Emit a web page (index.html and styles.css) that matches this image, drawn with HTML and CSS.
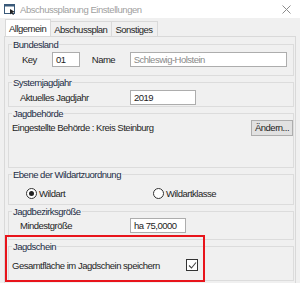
FILE: index.html
```html
<!DOCTYPE html>
<html lang="de">
<head>
    <meta charset="UTF-8">
    <title>Abschussplanung Einstellungen</title>
    <link rel="stylesheet" href="styles.css">
</head>
<body>
    <div class="window">
        <div class="titlebar">
            <svg class="app-icon" width="12" height="12" viewBox="0 0 12 12">
                <rect x="0.5" y="1.5" width="10" height="9" fill="#fff" stroke="#3a5a7a"/>
                <rect x="0.5" y="1.5" width="10" height="2" fill="#3a5a7a"/>
                <path d="M6 6 L11 9 L8.5 9.5 L10 11.5 L9 12 L7.6 10 L6 11.5 Z" fill="#222"/>
            </svg>
            <span class="title">Abschussplanung Einstellungen</span>
            <svg class="close" width="9" height="9" viewBox="0 0 9 9">
                <path d="M0.5 0.5 L8.5 8.5 M8.5 0.5 L0.5 8.5" stroke="#8c8c8c" stroke-width="1"/>
            </svg>
        </div>

        <div class="tabs">
            <div class="tab active">Allgemein</div>
            <div class="tab">Abschussplan</div>
            <div class="tab">Sonstiges</div>
        </div>

        <div class="panel">
            <div class="group g-land">
                <span class="legend">Bundesland</span>
                <div class="row">
                    <span class="lbl key">Key</span>
                    <span class="field f-key">01</span>
                    <span class="lbl name">Name</span>
                    <span class="field f-name">Schleswig-Holstein</span>
                </div>
            </div>

            <div class="group g-jahr">
                <span class="legend">Systemjagdjahr</span>
                <div class="row">
                    <span class="lbl wide">Aktuelles Jagdjahr</span>
                    <span class="field f-jahr">2019</span>
                </div>
            </div>

            <div class="group g-behoerde">
                <span class="legend">Jagdbehörde</span>
                <div class="row spread">
                    <span class="text">Eingestellte Behörde : Kreis Steinburg</span>
                    <button class="btn">Ändern...</button>
                </div>
            </div>

            <div class="group g-ebene">
                <span class="legend">Ebene der Wildartzuordnung</span>
                <div class="row radios">
                    <label class="radio"><span class="dot on"></span>Wildart</label>
                    <label class="radio"><span class="dot"></span>Wildartklasse</label>
                </div>
            </div>

            <div class="group g-groesse">
                <span class="legend">Jagdbezirksgröße</span>
                <div class="row">
                    <span class="lbl wide">Mindestgröße</span>
                    <span class="field f-ha">ha 75,0000</span>
                </div>
            </div>

            <div class="group g-schein">
                <span class="legend">Jagdschein</span>
                <div class="row">
                    <span class="text check-text">Gesamtfläche im Jagdschein speichern</span>
                    <span class="check">
                        <svg width="9" height="9" viewBox="0 0 9 9"><path d="M1 4.5 L3.5 7 L8 1.5" fill="none" stroke="#444" stroke-width="1.1"/></svg>
                    </span>
                </div>
            </div>

            <div class="highlight"></div>
        </div>
    </div>
</body>
</html>
```

FILE: styles.css
```css
* {
    box-sizing: border-box;
}

body {
    margin: 0;
    width: 300px;
    height: 283px;
    overflow: hidden;
    background: #f0f0f0;
    font-family: "Liberation Sans", Arial, sans-serif;
    font-size: 9.5px;
    letter-spacing: -0.5px;
    color: #1e1e1e;
    white-space: nowrap;
}

.window {
    height: 283px;
}

.titlebar {
    height: 18px;
    background: #fff;
    display: flex;
    align-items: center;
    padding-left: 4px;
}

.app-icon {
    margin-right: 4px;
}

.title {
    font-size: 9.5px;
    letter-spacing: -0.45px;
    color: #a0a0a0;
    flex: 1;
}

.close {
    margin-right: 9px;
}

.tabs {
    display: flex;
    padding-left: 5px;
    height: 18px;
    align-items: flex-end;
}

.tab {
    height: 15px;
    padding: 2px 4px 0 3px;
    border: 1px solid #d9d9d9;
    border-bottom: none;
    margin-left: -1px;
}

.tab.active {
    height: 17px;
    background: #fff;
    padding-top: 3px;
    margin-left: 0;
    position: relative;
    z-index: 1;
}

.panel {
    position: relative;
    margin: 0 4px;
    height: 247px;
    border: 1px solid #d9d9d9;
    border-bottom: none;
    padding: 1px 1px 0 3px;
}

.group {
    margin-top: 6px;
    border: 1px solid #dcdcdc;
    padding: 0 6px;
}

.legend {
    display: block;
    width: fit-content;
    margin: -6px 0 0 -3px;
    padding: 0 1px;
    height: 11px;
    line-height: 11px;
    background: #f0f0f0;
    color: #1c2d45;
}

.row {
    display: flex;
    align-items: center;
}

.field {
    display: block;
    height: 15px;
    background: #fff;
    border: 1px solid #adadad;
    padding: 0 3px;
    line-height: 13px;
}

.lbl.key {
    width: 37px;
    padding-left: 7px;
}

.f-key {
    width: 28px;
}

.lbl.name {
    width: 50px;
    padding-left: 12px;
}

.f-name {
    width: 158px;
    color: #8a8a8a;
}

.lbl.wide {
    width: 115px;
    padding-left: 5px;
}

.f-jahr {
    width: 66px;
}

.f-ha {
    width: 56px;
}

.g-land {
    height: 32px;
}

.g-land .row,
.g-jahr .row {
    height: 18px;
}

.g-jahr {
    height: 25px;
}

.g-behoerde {
    height: 55px;
    padding: 0;
}

.g-behoerde .legend,
.g-schein .legend {
    margin-left: 3px;
}

.g-behoerde .row {
    height: 17px;
    padding-left: 3px;
}

.spread {
    justify-content: space-between;
}

.btn {
    font: inherit;
    letter-spacing: inherit;
    color: #1e1e1e;
    height: 16px;
    width: 42px;
    padding: 0;
    background: #e1e1e1;
    border: 1px solid #adadad;
}

.g-ebene {
    height: 31px;
}

.radios {
    height: 26px;
    padding-left: 11px;
}

.radio {
    display: flex;
    align-items: center;
    width: 127px;
}

.dot {
    width: 11px;
    height: 11px;
    border: 1px solid #333;
    border-radius: 50%;
    background: #fff;
    margin-right: 2px;
    position: relative;
}

.dot.on::after {
    content: "";
    position: absolute;
    left: 2px;
    top: 2px;
    width: 5px;
    height: 5px;
    border-radius: 50%;
    background: #222;
}

.g-groesse {
    height: 29px;
}

.g-groesse .row {
    height: 16px;
}

.g-schein {
    height: 35px;
    padding: 0;
}

.g-schein .row {
    height: 26px;
    padding-left: 3px;
}

.check-text {
    width: 174px;
}

.check {
    width: 12px;
    height: 12px;
    border: 1px solid #333;
    background: #fff;
    display: flex;
    align-items: center;
    justify-content: center;
}

.highlight {
    position: absolute;
    left: 0;
    top: 198px;
    width: 200px;
    height: 47px;
    border: 2px solid #e8141b;
}
```
